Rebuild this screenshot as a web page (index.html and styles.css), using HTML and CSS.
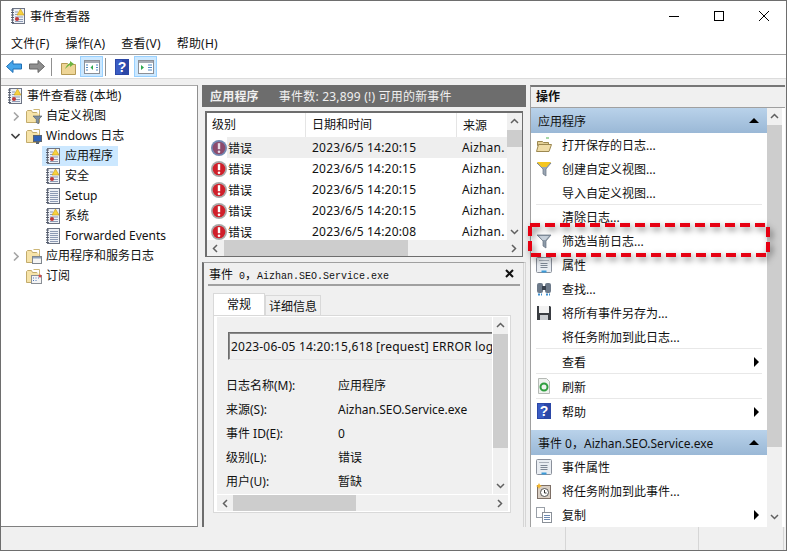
FILE: index.html
```html
<!DOCTYPE html>
<html lang="zh-CN">
<head>
    <meta charset="UTF-8">
    <title>事件查看器</title>
    <link rel="stylesheet" href="styles.css">
</head>
<body>
<svg class="defs" width="0" height="0">
    <symbol id="log" viewBox="0 0 16 16">
        <rect x="2.500" y="0.500" width="12" height="15" fill="#eef1f6" stroke="#6d7484"/>
        <path d="M1 2h3M1 4.500h3M1 7h3M1 9.500h3M1 12h3M1 14.500h3" stroke="#555c6c"/>
        <path d="M5 4h3M5 6.500h3M5 9h8M5 11.500h8M5 13.500h8" stroke="#8d9bb5"/>
        <path d="M10.500 1l3.500 6h-7z" fill="#f7d23e" stroke="#c79a1a" stroke-width=".6"/>
        <circle cx="7" cy="11" r="2" fill="#c23a3a"/>
    </symbol>
    <symbol id="logplain" viewBox="0 0 16 16">
        <rect x="2.500" y="0.500" width="12" height="15" fill="#eef1f6" stroke="#6d7484"/>
        <path d="M1 2h3M1 4.500h3M1 7h3M1 9.500h3M1 12h3M1 14.500h3" stroke="#555c6c"/>
        <path d="M5 3.500h8M5 5.500h8M5 7.500h8M5 9.500h8M5 11.500h8M5 13.500h8" stroke="#8d9bb5"/>
    </symbol>
    <symbol id="folder" viewBox="0 0 16 16">
        <path d="M0.500 3.500v11h13v-10h-7l-1-2h-4z" fill="#f6e3a8" stroke="#c2ab6c"/>
        <path d="M7.500 1.500h6v5" fill="#fff" stroke="#cdb778"/>
    </symbol>
    <symbol id="folder-filter" viewBox="0 0 16 16">
        <use href="#folder" width="16" height="16"/>
        <path d="M7 8h9l-3.300 3.500V16l-2.400-1.500v-3z" fill="#7f8fa0" stroke="#4f5c6a" stroke-width=".6"/>
    </symbol>
    <symbol id="folder-win" viewBox="0 0 16 16">
        <use href="#folder" width="16" height="16"/>
        <rect x="7.500" y="7.500" width="8" height="6" fill="#2f63b8" stroke="#5a6470"/>
        <path d="M10 15h3" stroke="#5a6470" stroke-width="2"/>
    </symbol>
    <symbol id="folder-app" viewBox="0 0 16 16">
        <use href="#folder" width="16" height="16"/>
        <rect x="6.500" y="8.500" width="9" height="7" fill="#f4f4f4" stroke="#7f868e"/>
        <path d="M7 9h8v1.500H7z" fill="#8fa3bb"/>
    </symbol>
    <symbol id="folder-sub" viewBox="0 0 16 16">
        <use href="#folder" width="16" height="16"/>
        <rect x="5.500" y="7.500" width="10" height="8" fill="#f4f4f4" stroke="#8a8f96"/>
        <path d="M7 10h1M9.500 10h1M12 10h1M7 12.500h1M9.500 12.500h1" stroke="#4d79b8"/>
        <circle cx="14" cy="8" r="1.500" fill="#d24a4a"/>
    </symbol>
    <symbol id="folder-open" viewBox="0 0 16 16">
        <path d="M1.500 4.500h5l1 1h5v3h-11z" fill="#e3cf95" stroke="#9c8850"/>
        <path d="M0.500 14.500l2-7h13l-2.500 7z" fill="#efdca6" stroke="#9c8850"/>
        <path d="M10 1h3" stroke="#4fae4f"/>
    </symbol>
    <symbol id="error" viewBox="0 0 16 16">
        <circle cx="8" cy="8" r="8" fill="#a9a9a9"/>
        <circle cx="8" cy="8" r="6.300" fill="#d01f2a"/>
        <path d="M8 3.200v6" stroke="#fff" stroke-width="2.400"/>
        <circle cx="8" cy="11.800" r="1.300" fill="#fff"/>
    </symbol>
    <symbol id="errorsel" viewBox="0 0 16 16">
        <circle cx="8" cy="8" r="8" fill="#7389b3"/>
        <circle cx="8" cy="8" r="6.300" fill="#8c4a6c"/>
        <path d="M8 3.200v6" stroke="#e8dce6" stroke-width="2.400"/>
        <circle cx="8" cy="11.800" r="1.300" fill="#e8dce6"/>
    </symbol>
    <symbol id="funnel" viewBox="0 0 16 16">
        <path d="M1 2h14l-5 6v7l-3-2V8z" fill="#8d9aa8" stroke="#66717f" stroke-width=".7"/>
        <path d="M3 3h10l-3.500 4h-3z" fill="#c7d0da"/>
    </symbol>
    <symbol id="funnelnew" viewBox="0 0 16 16">
        <path d="M1 2h14l-5 6v7l-3-2V8z" fill="#9aa6b4" stroke="#66717f" stroke-width=".7"/>
        <path d="M1 1h14l-4.500 5h-5z" fill="#f5c61f"/>
    </symbol>
    <symbol id="props" viewBox="0 0 16 16">
        <rect x="0.500" y="0.500" width="15" height="15" rx="1" fill="#e9edf2" stroke="#8a909b"/>
        <path d="M3 3.500h10" stroke="#a9b0ba"/>
        <path d="M4.500 6.500h7M4.500 8.500h7M4.500 10.500h7" stroke="#7d8794"/>
        <path d="M5.500 14.500h5" stroke="#3b9ad8" stroke-width="2"/>
    </symbol>
    <symbol id="help" viewBox="0 0 14 16">
        <rect width="14" height="16" fill="#2b47a6"/>
        <rect x="1" y="1" width="6" height="14" fill="#3a5cc4"/>
        <text x="7" y="13" class="help-glyph">?</text>
    </symbol>
    <symbol id="panel-left" viewBox="0 0 16 14">
        <rect x="0.500" y="0.500" width="15" height="13" fill="#fff" stroke="#8b8f96"/>
        <path d="M1 1h14v2H1z" fill="#a9adb5"/>
        <path d="M2 5h2M2 7.500h2M2 10h2M12 5h2M12 7.500h2M12 10h2" stroke="#4d88c4"/>
        <path d="M9 5v5L6.500 7.500z" fill="#2fa84f"/>
    </symbol>
    <symbol id="panel-right" viewBox="0 0 16 14">
        <rect x="0.500" y="0.500" width="15" height="13" fill="#fff" stroke="#8b8f96"/>
        <path d="M1 1h14v2H1z" fill="#a9adb5"/>
        <path d="M10 5h4M10 7.500h4M10 10h4" stroke="#4d88c4"/>
        <path d="M3 5v5l3-2.500z" fill="#2fa84f"/>
    </symbol>
    <symbol id="chev-up" viewBox="0 0 9 6"><path d="M1 5l3.500-3.500L8 5" fill="none" stroke="#606060" stroke-width="1.500"/></symbol>
    <symbol id="chev-down" viewBox="0 0 9 6"><path d="M1 1l3.500 3.500L8 1" fill="none" stroke="#606060" stroke-width="1.500"/></symbol>
    <symbol id="chev-left" viewBox="0 0 6 9"><path d="M5 1L1.500 4.500 5 8" fill="none" stroke="#606060" stroke-width="1.500"/></symbol>
    <symbol id="chev-right" viewBox="0 0 6 9"><path d="M1 1l3.500 3.500L1 8" fill="none" stroke="#606060" stroke-width="1.500"/></symbol>
    <symbol id="tree-closed" viewBox="0 0 6 9"><path d="M1 .5l4 4-4 4" fill="none" stroke="#a6a6a6" stroke-width="1.600"/></symbol>
    <symbol id="tree-open" viewBox="0 0 9 6"><path d="M.5 1l4 4 4-4" fill="none" stroke="#404040" stroke-width="1.600"/></symbol>
</svg>

<div class="window">
    <div class="titlebar">
        <svg class="title-icon"><use href="#log"/></svg>
        <span class="title-text">事件查看器</span>
        <div class="winbtns">
            <svg width="12" height="12" viewBox="0 0 12 12"><path d="M1 6.500h10" stroke="#000"/></svg>
            <svg width="12" height="12" viewBox="0 0 12 12"><rect x="1.500" y="1.500" width="9" height="9" fill="none" stroke="#000"/></svg>
            <svg width="12" height="12" viewBox="0 0 12 12"><path d="M1 1l10 10M11 1L1 11" stroke="#000"/></svg>
        </div>
    </div>

    <div class="menubar">
        <span>文件(F)</span>
        <span>操作(A)</span>
        <span>查看(V)</span>
        <span>帮助(H)</span>
    </div>

    <div class="toolbar">
        <svg class="tool-back" width="16" height="15" viewBox="0 0 16 15"><path d="M.5 7.500l6.500-6v3.500h8.500v5H7v3.500z" fill="#45a5ea" stroke="#1f6fb5"/></svg>
        <svg class="tool-forward" width="16" height="15" viewBox="0 0 16 15"><path d="M15.500 7.500l-6.500-6v3.500H.5v5H9v3.500z" fill="#8f8f8f" stroke="#666"/></svg>
        <i class="tool-sep"></i>
        <svg class="tool-folder" width="15" height="16" viewBox="0 0 15 16"><path d="M0.500 4.500v11h14v-10h-7l-1-1z" fill="#eed596" stroke="#b59a55"/><path d="M4 10c1-3 3-5 5-6V2l4 3-4 3V6c-2 1-3 2-5 4z" fill="#6cb33f"/></svg>
        <span class="toggle"><svg width="16" height="14"><use href="#panel-left"/></svg></span>
        <i class="tool-sep second"></i>
        <svg class="tool-help" width="14" height="16"><use href="#help"/></svg>
        <span class="toggle"><svg width="16" height="14"><use href="#panel-right"/></svg></span>
    </div>

    <div class="main">
        <div class="tree">
            <div class="node"><svg class="node-icon"><use href="#log"/></svg><span>事件查看器 (本地)</span></div>
            <div class="node lv1"><svg class="twisty" width="6" height="9"><use href="#tree-closed"/></svg><svg class="node-icon"><use href="#folder-filter"/></svg><span>自定义视图</span></div>
            <div class="node lv1"><svg class="twisty open" width="9" height="6"><use href="#tree-open"/></svg><svg class="node-icon"><use href="#folder-win"/></svg><span>Windows 日志</span></div>
            <div class="node lv2 selected"><svg class="node-icon"><use href="#log"/></svg><span>应用程序</span></div>
            <div class="node lv2"><svg class="node-icon"><use href="#log"/></svg><span>安全</span></div>
            <div class="node lv2"><svg class="node-icon"><use href="#logplain"/></svg><span>Setup</span></div>
            <div class="node lv2"><svg class="node-icon"><use href="#log"/></svg><span>系统</span></div>
            <div class="node lv2"><svg class="node-icon"><use href="#logplain"/></svg><span>Forwarded Events</span></div>
            <div class="node lv1"><svg class="twisty" width="6" height="9"><use href="#tree-closed"/></svg><svg class="node-icon"><use href="#folder-app"/></svg><span>应用程序和服务日志</span></div>
            <div class="node lv1"><svg class="node-icon"><use href="#folder-sub"/></svg><span>订阅</span></div>
        </div>

        <div class="center">
            <div class="log-head"><b>应用程序</b><span>事件数: 23,899 (!) 可用的新事件</span></div>

            <div class="list">
                <div class="list-body">
                    <div class="list-cols">
                        <div class="list-row list-header"><span class="c1">级别</span><span class="c2">日期和时间</span><span class="c3">来源</span></div>
                        <div class="list-row current"><svg class="err"><use href="#errorsel"/></svg><span class="c1b">错误</span><span class="c2 num">2023/6/5 14:20:15</span><span class="c3 num">Aizhan.</span></div>
                        <div class="list-row"><svg class="err"><use href="#error"/></svg><span class="c1b">错误</span><span class="c2 num">2023/6/5 14:20:15</span><span class="c3 num">Aizhan.</span></div>
                        <div class="list-row"><svg class="err"><use href="#error"/></svg><span class="c1b">错误</span><span class="c2 num">2023/6/5 14:20:15</span><span class="c3 num">Aizhan.</span></div>
                        <div class="list-row"><svg class="err"><use href="#error"/></svg><span class="c1b">错误</span><span class="c2 num">2023/6/5 14:20:15</span><span class="c3 num">Aizhan.</span></div>
                        <div class="list-row"><svg class="err"><use href="#error"/></svg><span class="c1b">错误</span><span class="c2 num">2023/6/5 14:20:08</span><span class="c3 num">Aizhan.</span></div>
                    </div>
                    <div class="vbar">
                        <svg width="9" height="6"><use href="#chev-up"/></svg>
                        <div class="vtrack"><i class="vthumb list-thumb"></i></div>
                        <svg width="9" height="6"><use href="#chev-down"/></svg>
                    </div>
                </div>
                <div class="hbar">
                    <svg width="6" height="9"><use href="#chev-left"/></svg>
                    <div class="htrack"><i class="hthumb list-hthumb"></i></div>
                    <svg width="6" height="9"><use href="#chev-right"/></svg>
                </div>
            </div>

            <div class="detail">
                <div class="detail-head">
                    <span class="detail-title"><span class="detail-cjk">事件</span> 0<span class="detail-cjk">，</span>Aizhan.SEO.Service.exe</span>
                    <svg width="9" height="9" viewBox="0 0 9 9"><path d="M1 1l7 7M8 1L1 8" stroke="#111" stroke-width="2"/></svg>
                </div>
                <div class="tabs">
                    <span class="tab active">常规</span>
                    <span class="tab">详细信息</span>
                </div>
                <div class="tab-panel">
                    <div class="panel-top">
                        <div class="panel-body">
                            <div class="msgbox">2023-06-05 14:20:15,618 [request] ERROR log</div>
                            <div class="field"><span>日志名称(M):</span><span>应用程序</span></div>
                            <div class="field"><span>来源(S):</span><span>Aizhan.SEO.Service.exe</span></div>
                            <div class="field"><span>事件 ID(E):</span><span>0</span></div>
                            <div class="field"><span>级别(L):</span><span>错误</span></div>
                            <div class="field"><span>用户(U):</span><span>暂缺</span></div>
                        </div>
                        <div class="vbar">
                            <svg width="9" height="6"><use href="#chev-up"/></svg>
                            <div class="vtrack"><i class="vthumb panel-thumb"></i></div>
                            <svg width="9" height="6"><use href="#chev-down"/></svg>
                        </div>
                    </div>
                    <div class="hbar panel-hbar">
                        <svg width="6" height="9"><use href="#chev-left"/></svg>
                        <div class="htrack"><i class="hthumb panel-hthumb"></i></div>
                        <svg width="6" height="9"><use href="#chev-right"/></svg>
                    </div>
                </div>
            </div>
        </div>

        <div class="actions">
            <div class="actions-head">操作</div>
            <div class="actions-body">
                <div class="actions-list">
                    <div class="section"><span>应用程序</span><i class="tri-up"></i></div>
                    <div class="item"><svg class="item-icon"><use href="#folder-open"/></svg><span>打开保存的日志...</span></div>
                    <div class="item"><svg class="item-icon"><use href="#funnelnew"/></svg><span>创建自定义视图...</span></div>
                    <div class="item sep"><span>导入自定义视图...</span></div>
                    <div class="item"><span>清除日志...</span></div>
                    <div class="item"><svg class="item-icon"><use href="#funnel"/></svg><span>筛选当前日志...</span></div>
                    <div class="item"><svg class="item-icon"><use href="#props"/></svg><span>属性</span></div>
                    <div class="item"><svg class="item-icon" viewBox="0 0 16 16"><rect x="1" y="2" width="6" height="10" rx="2" fill="#6d7a8a"/><rect x="9" y="2" width="6" height="10" rx="2" fill="#6d7a8a"/><rect x="6" y="5" width="4" height="4" fill="#39424e"/><path d="M2 13.500h4M10 13.500h4" stroke="#3b8fd0" stroke-width="2" stroke-dasharray="2 1"/></svg><span>查找...</span></div>
                    <div class="item"><svg class="item-icon" viewBox="0 0 16 16"><path d="M1 1h13l1 1v13H1z" fill="#3a3d42"/><rect x="3" y="1" width="10" height="7" fill="#f2f2f2"/><rect x="4" y="10" width="8" height="5" fill="#c9ccd0"/></svg><span>将所有事件另存为...</span></div>
                    <div class="item sep"><span>将任务附加到此日志...</span></div>
                    <div class="item tall sep"><span>查看</span><i class="tri-right"></i></div>
                    <div class="item tall sep"><svg class="item-icon" viewBox="0 0 16 16"><path d="M2.500 .5h8l3 3v12h-11z" fill="#eef2ee" stroke="#b5b9b5"/><circle cx="8" cy="9" r="3.500" fill="none" stroke="#2f9e3f" stroke-width="2"/></svg><span>刷新</span></div>
                    <div class="item tall"><svg class="item-icon"><use href="#help"/></svg><span>帮助</span><i class="tri-right"></i></div>
                    <div class="section second"><span>事件 0，Aizhan.SEO.Service.exe</span><i class="tri-up"></i></div>
                    <div class="item"><svg class="item-icon"><use href="#props"/></svg><span>事件属性</span></div>
                    <div class="item"><svg class="item-icon" viewBox="0 0 16 16"><rect x="1.500" y="2.500" width="13" height="13" fill="#d9cfc4" stroke="#7d6f66"/><circle cx="8.500" cy="9.500" r="4" fill="#fff" stroke="#555"/><path d="M8.500 7v3h2" fill="none" stroke="#333"/><path d="M3 0l1 2 2 1-2 1-1 2-1-2-2-1 2-1z" fill="#f3b52a"/></svg><span>将任务附加到此事件...</span></div>
                    <div class="item"><svg class="item-icon" viewBox="0 0 16 16"><rect x="0.500" y="0.500" width="8" height="10" fill="#fff" stroke="#9aa0a8"/><rect x="6.500" y="5.500" width="9" height="10" fill="#fff" stroke="#8a9098"/><path d="M8 8.500h6M8 10.500h6M8 12.500h6" stroke="#6d89b0"/></svg><span>复制</span><i class="tri-right"></i></div>
                </div>
                <div class="vbar actions-bar">
                    <svg width="9" height="6"><use href="#chev-up"/></svg>
                    <div class="vtrack"><i class="vthumb actions-thumb"></i></div>
                    <svg width="9" height="6"><use href="#chev-down"/></svg>
                </div>
            </div>
        </div>
    </div>

    <div class="statusbar">
        <span></span><span></span><span></span>
    </div>

    <!-- red marker drawn over the screenshot -->
    <svg class="highlight" width="243" height="35" viewBox="0 0 243 35">
        <rect x="2" y="2" width="238" height="30" fill="none" stroke="#e60012" stroke-width="4" stroke-dasharray="10 5"/>
    </svg>
</div>
</body>
</html>
```

FILE: styles.css
```css
* {
    margin: 0;
    padding: 0;
    box-sizing: border-box;
}

body {
    font-family: "Noto Sans", "Noto Sans CJK SC", sans-serif;
    font-size: 12px;
    color: #111;
    background: #fff;
    overflow: hidden;
}

.defs {
    position: absolute;
}

.help-glyph {
    font-family: "Liberation Sans", sans-serif;
    font-size: 14px;
    font-weight: 700;
    fill: #fff;
    text-anchor: middle;
}

.window {
    position: relative;
    width: 787px;
    height: 551px;
    border: 1px solid #6e6e6e;
    display: flex;
    flex-direction: column;
    background: #fff;
}

/* title + menu */
.titlebar {
    height: 29px;
    display: flex;
    align-items: center;
    padding-left: 9px;
    flex: none;
}

.title-icon {
    width: 16px;
    height: 16px;
    margin-right: 4px;
}

.winbtns {
    margin-left: auto;
    display: flex;
    gap: 33px;
    padding-right: 16px;
}

.menubar {
    height: 25px;
    flex: none;
    display: flex;
    align-items: center;
    gap: 16px;
    padding: 1px 0 0 10px;
    border-bottom: 1px solid #a0a0a0;
    letter-spacing: 0.2px;
}

.toolbar {
    height: 23px;
    flex: none;
    display: flex;
    align-items: center;
    padding-left: 5px;
}

.tool-forward {
    margin-left: 7px;
}

.tool-sep {
    width: 1px;
    height: 18px;
    background: #909090;
    margin: 0 9px 0 6px;
}

.tool-sep.second {
    margin-left: 2px;
}

.tool-folder {
    margin-right: 4px;
}

.tool-help {
    margin-right: 5px;
}

.toggle {
    width: 23px;
    height: 21px;
    background: #cce8ff;
    border: 1px solid #99d1ff;
    display: flex;
    align-items: center;
    justify-content: center;
}

/* three panes */
.main {
    flex: 1;
    min-height: 0;
    display: flex;
    background: #f0f0f0;
    border-top: 1px solid #dcdcdc;
    padding-top: 6px;
}

.tree {
    width: 197px;
    flex: none;
    background: #fff;
    border-top: 1px solid #a8a8a8;
    border-right: 1px solid #8f8f8f;
    border-bottom: 1px solid #808080;
}

.node {
    height: 20px;
    display: flex;
    align-items: center;
    padding-left: 6px;
}

.node span {
    margin-top: -2px;
}

.node-icon {
    width: 16px;
    height: 16px;
    margin-right: 4px;
    flex: none;
}

.lv1 {
    padding-left: 25px;
}

.twisty {
    margin-left: -13px;
    margin-right: 7px;
    flex: none;
}

.twisty.open {
    margin-left: -15px;
    margin-right: 6px;
}

.lv2 {
    margin-left: 41px;
    padding-left: 3px;
}

.selected {
    width: 76px;
    background: #cce8ff;
}

.center {
    width: 324px;
    flex: none;
    margin-left: 4px;
    display: flex;
    flex-direction: column;
}

.log-head {
    height: 22px;
    flex: none;
    background: #6d6d6d;
    color: #f0f0f0;
    display: flex;
    align-items: center;
    padding-left: 8px;
    gap: 20px;
    letter-spacing: 0.2px;
}

.list {
    margin: 4px 3px 0;
    height: 146px;
    flex: none;
    border: 2px solid #6d6d6d;
    border-width: 2px 1px 1px 2px;
    background: #fff;
    display: flex;
    flex-direction: column;
}

.list-body {
    flex: 1;
    min-height: 0;
    display: flex;
}

.list-cols {
    flex: 1;
    min-width: 0;
    overflow: hidden;
}

.list-row {
    height: 21px;
    display: flex;
    align-items: center;
    white-space: nowrap;
    position: relative;
}

.list-header {
    height: 24px;
}

.c1 {
    width: 99px;
    padding-left: 5px;
    border-right: 1px solid #e5e5e5;
    height: 100%;
    line-height: 24px;
}

.list-header .c2 {
    width: 151px;
    padding-left: 6px;
    border-right: 1px solid #e5e5e5;
    height: 100%;
    line-height: 24px;
}

.list-header .c3 {
    padding-left: 6px;
}

.err {
    width: 16px;
    height: 16px;
    margin-left: 4px;
    flex: none;
}

.c1b {
    width: 79px;
    padding-left: 1px;
}

.num {
    letter-spacing: 0.2px;
}

.list-row .c2.num {
    width: 150px;
    padding-left: 6px;
}

.list-row .c3.num {
    padding-left: 6px;
}

.current::before {
    content: "";
    position: absolute;
    left: 20px;
    top: 0;
    bottom: 0;
    right: 0;
    background: #eeeeee;
}

.current > * {
    position: relative;
}

/* scrollbars */
.vbar {
    width: 15px;
    flex: none;
    background: #f0f0f0;
    display: flex;
    flex-direction: column;
    align-items: center;
    padding: 5px 0;
    gap: 5px;
}

.vtrack {
    flex: 1;
    width: 100%;
    min-height: 0;
}

.vthumb {
    display: block;
    background: #cdcdcd;
    width: 100%;
}

.hbar {
    height: 16px;
    flex: none;
    background: #f0f0f0;
    display: flex;
    align-items: center;
    padding: 0 5px;
    gap: 5px;
}

.htrack {
    flex: 1;
    height: 100%;
}

.hthumb {
    display: block;
    height: 100%;
    background: #cdcdcd;
}

.list-thumb {
    height: 17px;
    margin-top: 1px;
}

.list-hthumb {
    width: 184px;
    margin-left: 1px;
}

.panel-thumb {
    height: 114px;
    margin-top: 1px;
}

.panel-hthumb {
    width: 123px;
}

.actions-thumb {
    height: 322px;
    margin-top: 1px;
}

/* event detail */
.detail {
    flex: 1;
    min-height: 0;
    margin-top: 5px;
    border-top: 1px solid #a0a0a0;
    border-left: 2px solid #6d6d6d;
    border-right: 3px double #d5d5d5;
    display: flex;
    flex-direction: column;
    padding: 0 3px 0 4px;
}

.detail-head {
    height: 23px;
    flex: none;
    display: flex;
    align-items: center;
    justify-content: space-between;
    border-bottom: 2px solid #a0a0a0;
    padding: 0 6px 1px 1px;
}

.detail-title {
    font-family: "Liberation Mono", "Noto Sans CJK SC", monospace;
    font-size: 10px;
}

.detail-cjk {
    font-family: "Noto Sans CJK SC", sans-serif;
    font-size: 12px;
}

.tabs {
    display: flex;
    margin-top: 7px;
    padding-left: 5px;
    height: 22px;
    flex: none;
}

.tab {
    width: 56px;
    border: 1px solid #d9d9d9;
    border-bottom: none;
    text-align: center;
    line-height: 21px;
    background: #f0f0f0;
    margin-top: 2px;
}

.tab.active {
    width: 52px;
    background: #fff;
    margin-top: 0;
    line-height: 21px;
}

.tab-panel {
    margin-left: 5px;
    width: 298px;
    height: 198px;
    flex: none;
    background: #fff;
    border: 1px solid #d9d9d9;
    padding: 1px 2px 1px 3px;
    display: flex;
    flex-direction: column;
}

.panel-top {
    flex: 1;
    min-height: 0;
    display: flex;
}

.panel-body {
    flex: 1;
    min-width: 0;
    background: #f0f0f0;
    padding: 15px 0 0 9px;
    overflow: hidden;
    margin-right: 1px;
}

.msgbox {
    height: 28px;
    margin-left: 2px;
    border-top: 1px solid #6d6d6d;
    border-left: 1px solid #6d6d6d;
    border-bottom: 1px solid #e8e8e8;
    box-shadow: inset 1px 1px 0 #8a8a8a;
    white-space: nowrap;
    overflow: hidden;
    line-height: 27px;
    padding-left: 2px;
    letter-spacing: 0.2px;
}

.field {
    height: 24px;
    display: flex;
    align-items: center;
    white-space: nowrap;
}

.msgbox + .field {
    margin-top: 13px;
}

.field span:first-child {
    width: 112px;
}

.panel-hbar {
    margin-top: 1px;
}

/* actions pane */
.actions {
    width: 255px;
    flex: none;
    margin-left: 4px;
    background: #fff;
    border-top: 2px solid #777;
    border-left: 1px solid #a0a0a0;
    display: flex;
    flex-direction: column;
}

.actions-head {
    height: 21px;
    flex: none;
    background: #f0f0f0;
    border-bottom: 1px solid #a0a0a0;
    font-weight: 700;
    line-height: 20px;
    padding-left: 5px;
}

.actions-body {
    flex: 1;
    min-height: 0;
    display: flex;
}

.actions-list {
    flex: 1;
    min-width: 0;
    overflow: hidden;
}

.actions-bar {
    margin-right: 3px;
    padding-bottom: 7px;
}

.section {
    height: 25px;
    background: linear-gradient(#b9d2ea, #9ab8d6);
    display: flex;
    align-items: center;
    justify-content: space-between;
    padding: 0 8px 0 7px;
}

.section.second {
    margin-top: 6px;
}

.tri-up {
    width: 0;
    height: 0;
    border-left: 5px solid transparent;
    border-right: 5px solid transparent;
    border-bottom: 5px solid #000;
}

.tri-right {
    width: 0;
    height: 0;
    margin-left: auto;
    margin-right: 8px;
    border-top: 5px solid transparent;
    border-bottom: 5px solid transparent;
    border-left: 5px solid #000;
}

.item {
    height: 24px;
    display: flex;
    align-items: center;
    padding-left: 31px;
    position: relative;
}

.item.tall {
    height: 25px;
}

.item-icon {
    position: absolute;
    left: 5px;
    top: 4px;
    width: 16px;
    height: 16px;
}

.item.sep::after {
    content: "";
    position: absolute;
    left: 5px;
    right: 5px;
    bottom: 0;
    height: 1px;
    background: #e8e8e8;
}

.statusbar {
    height: 23px;
    flex: none;
    display: flex;
    justify-content: flex-end;
    background: #f0f0f0;
}

.statusbar span {
    border-left: 1px solid #d6d6d6;
}

.statusbar span:nth-child(1) {
    width: 133px;
}

.statusbar span:nth-child(2) {
    width: 85px;
}

.statusbar span:nth-child(3) {
    width: 3px;
}

.highlight {
    position: absolute;
    left: 527px;
    top: 222px;
    overflow: visible;
    filter: drop-shadow(2px 3px 3px rgba(0, 0, 0, 0.5));
}
```
